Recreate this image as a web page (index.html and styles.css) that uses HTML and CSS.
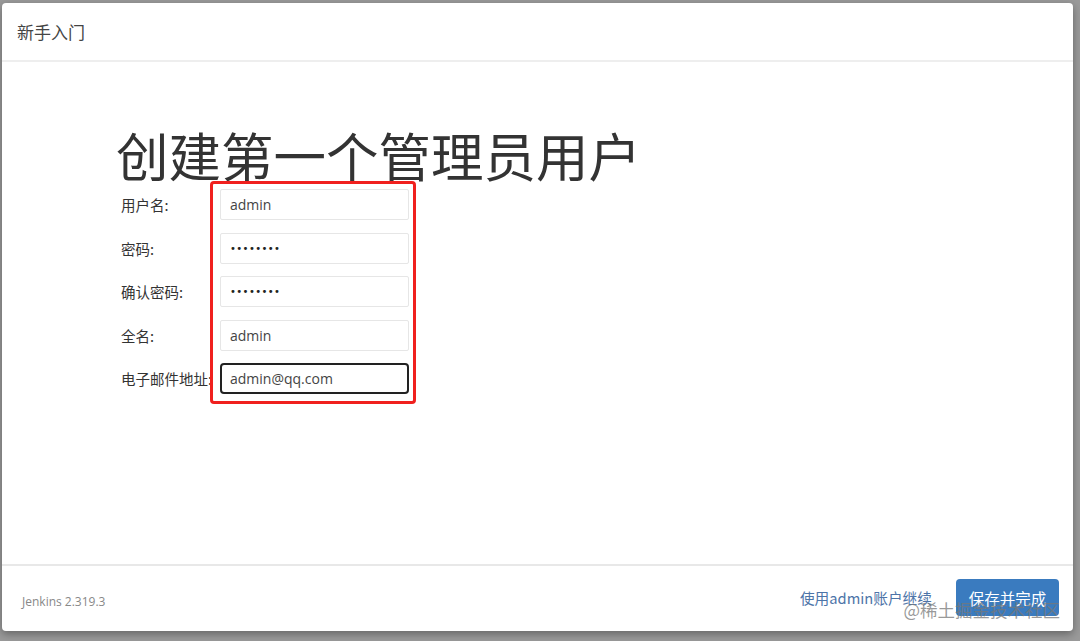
FILE: index.html
```html
<!DOCTYPE html>
<html lang="zh">
<head>
<meta charset="utf-8">
<title>新手入门</title>
<link rel="stylesheet" href="styles.css">
</head>
<body>
<div class="modal">
  <div class="modal-header">新手入门</div>
  <div class="modal-body">
    <h1 class="title">创建第一个管理员用户</h1>
    <div class="form">
      <div class="row"><label>用户名:</label><div class="input">admin</div></div>
      <div class="row"><label>密码:</label><div class="input dots">••••••••</div></div>
      <div class="row"><label>确认密码:</label><div class="input dots">••••••••</div></div>
      <div class="row"><label>全名:</label><div class="input">admin</div></div>
      <div class="row"><label>电子邮件地址:</label><div class="input focused">admin@qq.com</div></div>
      <div class="highlight"></div>
    </div>
  </div>
  <div class="modal-footer">
    <span class="version">Jenkins 2.319.3</span>
    <div class="actions">
      <a class="link">使用admin账户继续</a>
      <button class="btn">保存并完成</button>
    </div>
    <span class="watermark">@稀土掘金技术社区</span>
  </div>
</div>
</body>
</html>
```

FILE: styles.css
```css
* { box-sizing: border-box; }
html, body { margin: 0; padding: 0; }
body {
  width: 1080px;
  height: 641px;
  background: #9a9a9a;
  font-family: "Open Sans", "Noto Sans CJK SC", sans-serif;
  color: #333;
  padding: 3px 7px 10px 2px;
  overflow: hidden;
}
.modal {
  width: 1071px;
  height: 628px;
  background: #fff;
  border-radius: 4px;
  box-shadow: 0 3px 8px rgba(0,0,0,0.35);
  display: flex;
  flex-direction: column;
  position: relative;
}
.modal-header {
  height: 59px;
  border-bottom: 2px solid #eeeeee;
  padding: 0 15px;
  display: flex;
  align-items: center;
  font-family: "Noto Sans CJK SC", sans-serif;
  font-size: 17px;
  color: #444;
}
.modal-body {
  flex: 1;
  padding: 63px 0 0 114px;
}
.title {
  margin: 0;
  font-family: "Noto Sans CJK SC", sans-serif;
  font-weight: 400;
  font-size: 52.5px;
  line-height: 58px;
  color: #333;
}
.form {
  position: relative;
  display: flex;
  flex-direction: column;
  gap: 12.5px;
  margin-top: 6px;
  width: 300px;
}
.row {
  display: flex;
  align-items: center;
  height: 31px;
}
.row label {
  width: 104px;
  padding-left: 5px;
  font-family: "Noto Sans CJK SC", sans-serif;
  font-size: 14.5px;
  color: #333;
  white-space: nowrap;
}
.input {
  width: 189px;
  height: 31px;
  border: 1px solid #e6e6e6;
  border-radius: 2px;
  padding: 0 9px;
  display: flex;
  align-items: center;
  font-size: 14px;
  color: #444;
}
.input.dots {
  font-family: "DejaVu Sans", sans-serif;
  font-size: 10px;
  letter-spacing: 0.4px;
  color: #222;
}
.input.focused {
  border: 2px solid #222;
  border-radius: 4px;
  padding: 0 8px;
}
.highlight {
  position: absolute;
  left: 94px;
  top: -8px;
  width: 206px;
  height: 223px;
  border: 3px solid #f0201e;
  border-radius: 4px;
  pointer-events: none;
}
.modal-footer {
  height: 67px;
  border-top: 2px solid #e8e8e8;
  display: flex;
  align-items: center;
  justify-content: space-between;
  padding: 0 14px 0 20px;
  position: relative;
}
.version {
  font-size: 12px;
  color: #888;
  margin-top: 6px;
}
.actions {
  display: flex;
  align-items: center;
  gap: 24px;
  margin-top: -2px;
}
.link {
  font-family: "Noto Sans CJK SC", sans-serif;
  font-size: 14.7px;
  color: #4d74a8;
}
.btn {
  width: 103px;
  height: 37px;
  border: none;
  border-radius: 4px;
  background: #3a7bbf;
  color: #fff;
  font-family: "Noto Sans CJK SC", sans-serif;
  font-size: 15.5px;
  padding: 0;
}
.watermark {
  position: absolute;
  right: 13px;
  bottom: 9px;
  font-family: "Noto Sans CJK SC", sans-serif;
  font-size: 17.5px;
  color: rgba(120,120,120,0.75);
}
```
